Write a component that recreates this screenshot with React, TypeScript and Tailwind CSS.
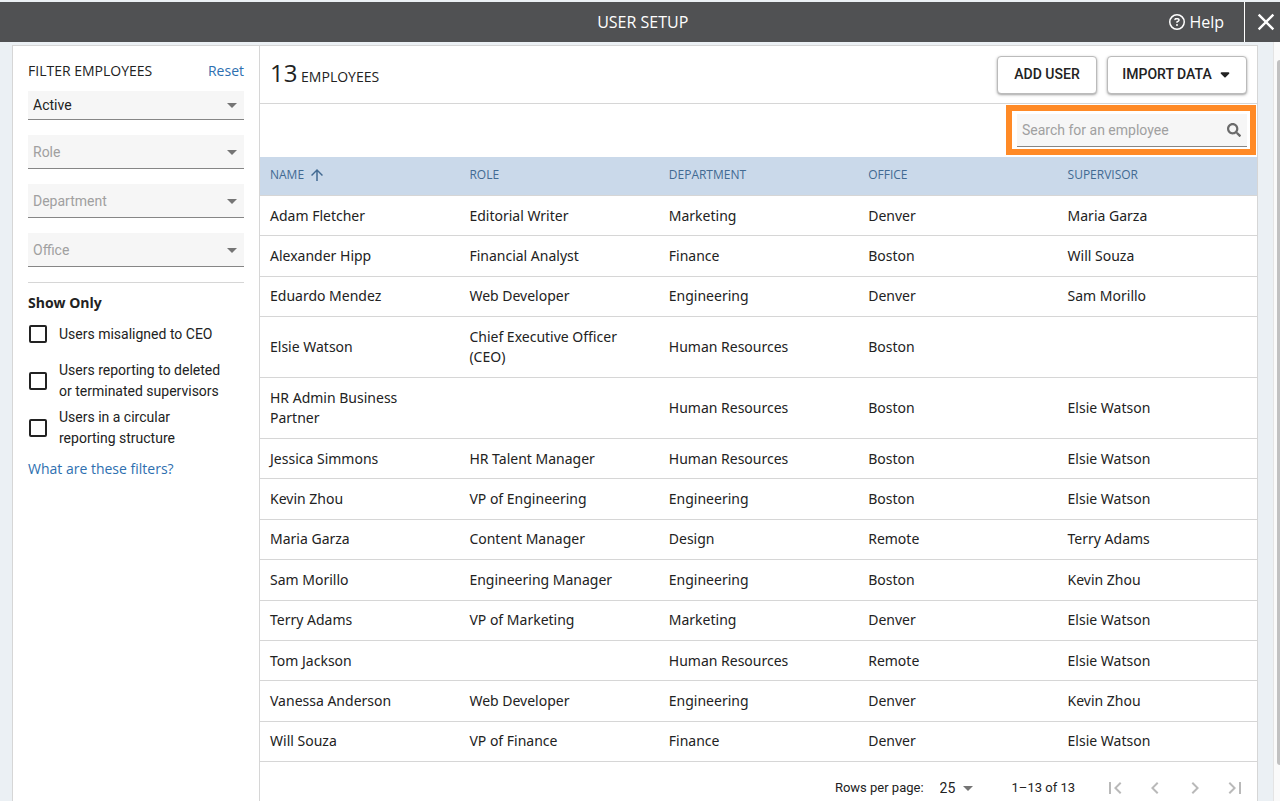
import { useState } from "react";
import { FaCaretDown, FaRegCircleQuestion } from "react-icons/fa6";
import { FaSearch } from "react-icons/fa";
import {
  MdArrowDropDown,
  MdArrowUpward,
  MdChevronLeft,
  MdChevronRight,
  MdClose,
  MdFirstPage,
  MdLastPage,
} from "react-icons/md";

const employees = [
  { name: "Adam Fletcher", role: "Editorial Writer", department: "Marketing", office: "Denver", supervisor: "Maria Garza" },
  { name: "Alexander Hipp", role: "Financial Analyst", department: "Finance", office: "Boston", supervisor: "Will Souza" },
  { name: "Eduardo Mendez", role: "Web Developer", department: "Engineering", office: "Denver", supervisor: "Sam Morillo" },
  { name: "Elsie Watson", role: "Chief Executive Officer (CEO)", department: "Human Resources", office: "Boston", supervisor: "" },
  { name: "HR Admin Business Partner", role: "", department: "Human Resources", office: "Boston", supervisor: "Elsie Watson" },
  { name: "Jessica Simmons", role: "HR Talent Manager", department: "Human Resources", office: "Boston", supervisor: "Elsie Watson" },
  { name: "Kevin Zhou", role: "VP of Engineering", department: "Engineering", office: "Boston", supervisor: "Elsie Watson" },
  { name: "Maria Garza", role: "Content Manager", department: "Design", office: "Remote", supervisor: "Terry Adams" },
  { name: "Sam Morillo", role: "Engineering Manager", department: "Engineering", office: "Boston", supervisor: "Kevin Zhou" },
  { name: "Terry Adams", role: "VP of Marketing", department: "Marketing", office: "Denver", supervisor: "Elsie Watson" },
  { name: "Tom Jackson", role: "", department: "Human Resources", office: "Remote", supervisor: "Elsie Watson" },
  { name: "Vanessa Anderson", role: "Web Developer", department: "Engineering", office: "Denver", supervisor: "Kevin Zhou" },
  { name: "Will Souza", role: "VP of Finance", department: "Finance", office: "Denver", supervisor: "Elsie Watson" },
];

const showOnly = [
  { id: "misaligned", label: "Users misaligned to CEO" },
  { id: "terminated", label: "Users reporting to deleted or terminated supervisors" },
  { id: "circular", label: "Users in a circular reporting structure" },
];

type FilterProps = {
  label: string;
  options: string[];
  compact?: boolean;
};

const FilterSelect = ({ label, options, compact }: FilterProps) => (
  <div className="grid items-center border-b border-[#868686] bg-[#f6f6f6]">
    <select
      aria-label={label}
      className={
        compact
          ? "col-start-1 row-start-1 h-7 w-full appearance-none px-[5px] font-[Roboto,sans-serif] text-sm text-[#222]"
          : "col-start-1 row-start-1 h-[33px] w-full appearance-none px-[5px] font-[Roboto,sans-serif] text-sm text-[#a0a0a0]"
      }
    >
      {options.map((option) => (
        <option key={option}>{option}</option>
      ))}
    </select>
    <MdArrowDropDown className="pointer-events-none col-start-1 row-start-1 size-6 justify-self-end text-[#757575]" />
  </div>
);

const TopBar = () => (
  <header className="mt-0.5 flex h-10 shrink-0 bg-[#505153] text-white">
    <div className="w-[116px] shrink-0" />
    <h1 className="flex-1 self-center text-center text-base">USER SETUP</h1>
    <a href="#help" className="flex items-center gap-1 pr-5 text-base">
      <FaRegCircleQuestion className="size-4" />
      Help
    </a>
    <button aria-label="Close" className="flex w-9 items-center justify-end border-l border-white">
      <MdClose className="size-7" />
    </button>
  </header>
);

const Sidebar = () => (
  <aside className="w-[247px] shrink-0 border-r border-[#d6d6d6] px-[15px] pt-[15px]">
    <div className="mb-[10px] flex justify-between text-sm">
      <h2>FILTER EMPLOYEES</h2>
      <a href="#reset" className="text-[#2e6fb0]">Reset</a>
    </div>
    <div className="flex flex-col gap-[15px] border-b border-[#d6d6d6] pb-[15px]">
      <FilterSelect label="Status" options={["Active", "Inactive"]} compact />
      <FilterSelect label="Role" options={["Role"]} />
      <FilterSelect label="Department" options={["Department"]} />
      <FilterSelect label="Office" options={["Office"]} />
    </div>

    <h3 className="mt-[10px] text-sm font-bold">Show Only</h3>
    <div className="flex flex-col gap-[5px] font-[Roboto,sans-serif] text-sm leading-[21px]">
      {showOnly.map((item) => (
        <label key={item.id} htmlFor={item.id} className="flex min-h-[42px] items-center gap-3 pr-4">
          <input
            id={item.id}
            type="checkbox"
            className="ml-px size-[18px] shrink-0 appearance-none rounded-xs border-2 border-[#222] checked:bg-[#222]"
          />
          {item.label}
        </label>
      ))}
    </div>
    <a href="#filters" className="mt-[10px] block text-sm text-[#2e6fb0]">
      What are these filters?
    </a>
  </aside>
);

const Toolbar = () => (
  <div className="flex h-[58px] items-center justify-between border-b border-[#d6d6d6] px-[10px]">
    <h2 className="pb-1 text-sm">
      <span className="text-2xl">13</span> EMPLOYEES
    </h2>
    <div className="flex gap-[10px] font-[Roboto,sans-serif] text-sm font-medium">
      <button className="h-[38px] w-[100px] rounded border border-[#bbb] bg-white pb-px shadow-sm shadow-black/30">
        ADD USER
      </button>
      <button className="flex h-[38px] w-[140px] items-center justify-center gap-[6px] rounded border border-[#bbb] bg-white pb-px shadow-sm shadow-black/30">
        IMPORT DATA
        <FaCaretDown className="size-3.5" />
      </button>
    </div>
  </div>
);

const SearchRow = () => {
  const [query, setQuery] = useState("");

  return (
    <div className="flex h-[53px] items-start justify-end pt-px pr-px">
      <div className="h-[50px] w-[250px] border-6 border-[#ff8a26] pt-[3px] pr-[3px] pl-[5px]">
        <div className="flex h-[33px] items-center border-b border-[#868686] bg-[#f6f6f6] pr-[6px] pl-[5px]">
          <input
            type="text"
            aria-label="Search for an employee"
            placeholder="Search for an employee"
            value={query}
            onChange={(e) => setQuery(e.target.value)}
            className="min-w-0 flex-1 font-[Roboto,sans-serif] text-sm outline-none placeholder:text-[#a0a0a0]"
          />
          <FaSearch className="size-3.5 text-[#6b6b6b]" />
        </div>
      </div>
    </div>
  );
};

const EmployeeTable = () => (
  <table className="h-[605px] w-full table-fixed border-separate border-spacing-0 text-left text-sm">
    <thead className="bg-[#cad9ea] text-xs text-[#426a92]">
      <tr className="h-[39px]">
        <th className="border-b border-[#d6d6d6] px-[10px] pb-0.5 font-normal">
          <span className="flex items-center gap-1">
            NAME
            <MdArrowUpward className="size-[18px]" />
          </span>
        </th>
        <th className="border-b border-[#d6d6d6] px-[10px] pb-0.5 font-normal">ROLE</th>
        <th className="border-b border-[#d6d6d6] px-[10px] pb-0.5 font-normal">DEPARTMENT</th>
        <th className="border-b border-[#d6d6d6] px-[10px] pb-0.5 font-normal">OFFICE</th>
        <th className="border-b border-[#d6d6d6] px-[10px] pb-0.5 font-normal">SUPERVISOR</th>
      </tr>
    </thead>
    <tbody className="font-['Noto_Sans',sans-serif]">
      {employees.map((person) => (
        <tr key={person.name}>
          <td className="border-b border-[#d6d6d6] py-[9px] pr-8 pl-[10px]">{person.name}</td>
          <td className="border-b border-[#d6d6d6] py-[9px] pr-8 pl-[10px]">{person.role}</td>
          <td className="border-b border-[#d6d6d6] py-[9px] pr-8 pl-[10px]">{person.department}</td>
          <td className="border-b border-[#d6d6d6] py-[9px] pr-8 pl-[10px]">{person.office}</td>
          <td className="border-b border-[#d6d6d6] py-[9px] pr-8 pl-[10px]">{person.supervisor}</td>
        </tr>
      ))}
    </tbody>
  </table>
);

const Pagination = () => (
  <div className="flex h-[52px] items-center justify-end pr-[2px] font-[Roboto,sans-serif] text-sm">
    <label htmlFor="rows" className="mr-4 text-[13px]">Rows per page:</label>
    <div className="mr-8 grid w-10 items-center">
      <select id="rows" className="col-start-1 row-start-1 appearance-none">
        <option>25</option>
        <option>50</option>
      </select>
      <MdArrowDropDown className="pointer-events-none col-start-1 row-start-1 size-6 justify-self-end text-[#757575]" />
    </div>
    <span className="mr-5 text-[13px]">1–13 of 13</span>
    <div className="flex text-[#b9b9b9]">
      <button aria-label="First page" className="flex size-10 items-center justify-center">
        <MdFirstPage className="size-6" />
      </button>
      <button aria-label="Previous page" className="flex size-10 items-center justify-center">
        <MdChevronLeft className="size-6" />
      </button>
      <button aria-label="Next page" className="flex size-10 items-center justify-center">
        <MdChevronRight className="size-6" />
      </button>
      <button aria-label="Last page" className="flex size-10 items-center justify-center">
        <MdLastPage className="size-6" />
      </button>
    </div>
  </div>
);

const App = () => {
  return (
    <div className="flex h-screen flex-col overflow-hidden bg-[#ebf0f4] font-['Open_Sans',sans-serif] text-[#222]">
      <TopBar />
      <div className="flex min-h-0 flex-1">
        <div className="mt-[3px] mr-[15px] ml-3 flex min-w-0 flex-1 border border-b-0 border-[#d6d6d6] bg-white">
          <Sidebar />
          <main className="min-w-0 flex-1">
            <Toolbar />
            <SearchRow />
            <EmployeeTable />
            <Pagination />
          </main>
        </div>
        {/* Scroll track */}
        <div className="flex w-[7px] justify-end border-l border-[#e4e4e4] bg-[#fafafa] pt-[18px] pb-9">
          <div className="w-[3px] rounded-l bg-[#c1c1c1]" />
        </div>
      </div>
    </div>
  );
};

export default App;
